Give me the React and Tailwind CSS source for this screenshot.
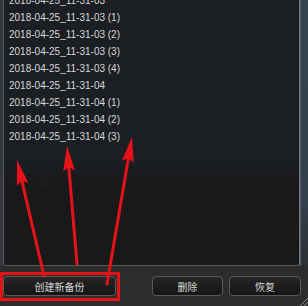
import React from "react";

const rows = [
  "2018-04-25_11-31-03",
  "2018-04-25_11-31-03 (1)",
  "2018-04-25_11-31-03 (2)",
  "2018-04-25_11-31-03 (3)",
  "2018-04-25_11-31-03 (4)",
  "2018-04-25_11-31-04",
  "2018-04-25_11-31-04 (1)",
  "2018-04-25_11-31-04 (2)",
  "2018-04-25_11-31-04 (3)",
];

function Arrow({ tail, tip }) {
  const [x1, y1] = tail;
  const [x2, y2] = tip;
  const dx = x2 - x1;
  const dy = y2 - y1;
  const len = Math.hypot(dx, dy);
  const ux = dx / len;
  const uy = dy / len;
  const px = -uy;
  const py = ux;
  const hl = 25;
  const hw = 6;
  const bx = x2 - ux * hl;
  const by = y2 - uy * hl;
  const nx = x2 - ux * (hl - 4);
  const ny = y2 - uy * (hl - 4);
  const pts = [
    [x2, y2],
    [bx + px * hw, by + py * hw],
    [nx, ny],
    [bx - px * hw, by - py * hw],
  ]
    .map((p) => p.join(","))
    .join(" ");
  return (
    <g>
      <line x1={x1} y1={y1} x2={nx} y2={ny} stroke="#e5121a" strokeWidth="3" strokeLinecap="round" />
      <polygon points={pts} fill="#e5121a" />
    </g>
  );
}

function Btn({ className, children }) {
  return (
    <div
      className={
        "h-[20px] flex items-center justify-center rounded-[4px] border border-[#5a5a5a] bg-[linear-gradient(to_bottom,#262626,#151515)] text-[10px] text-[#d6d6d6] " +
        className
      }
      style={{ fontFamily: '"Noto Sans CJK SC", "Noto Sans", sans-serif' }}
    >
      {children}
    </div>
  );
}

export default function App() {
  return (
    <div className="relative w-[308px] h-[306px] overflow-hidden bg-[#2c2c2c]">
      <div className="flex h-[266px]">
        <div className="w-[3px] bg-[#33373b]" />
        <div className="w-[297px] h-[266px] border-l border-r border-b border-l-[#575b60] border-r-[#6e747b] border-b-[#5a5a5a] rounded-b-[3px] bg-[linear-gradient(to_bottom,#1b1e22_0px,#1b1f23_160px,#19191a_182px,#19191a_266px)] overflow-hidden flex flex-col">
          <div
            className="mt-[-8px] flex flex-col text-[10px] text-[#d8d8d8]"
            style={{ fontFamily: '"Liberation Sans", Arial, sans-serif' }}
          >
            {rows.map((r) => (
              <div key={r} className="h-[17px] flex items-center pl-[5px]">
                {r}
              </div>
            ))}
          </div>
          <div className="mt-[28px] pl-[2px] text-[10px] text-[#1f2022]" style={{ fontFamily: '"Noto Sans CJK SC", sans-serif' }}>
            显示 设置
          </div>
          <div className="mt-[14px] flex gap-[14px] pl-[14px] text-[10px] text-[#1e1e1f]" style={{ fontFamily: '"Noto Sans CJK SC", sans-serif' }}>
            <div className="w-[36px] text-center">打开</div>
            <div className="w-[56px] text-center">分享</div>
            <div className="w-[56px] h-[14px] border border-[#1d1d1e] rounded-[2px] text-center leading-[12px]">分享</div>
            <div className="w-[64px] h-[14px] border border-[#1d1d1e] rounded-[2px] text-center leading-[12px]">退出</div>
          </div>
        </div>
        <div className="w-[8px] border-l border-l-[#59616a] bg-[linear-gradient(to_bottom,#36424d,#33404b_200px,#2d3034)]" />
      </div>
      <div className="flex items-center mt-[10px] pl-[3px]">
        <Btn className="w-[113px]">创建新备份</Btn>
        <Btn className="w-[71px] ml-[36px]">删除</Btn>
        <Btn className="w-[72px] ml-[6px]">恢复</Btn>
      </div>
      <svg className="absolute right-0 bottom-0" width="10" height="10" viewBox="0 0 10 10">
        <line x1="2" y1="10" x2="10" y2="2" stroke="#8a8a8a" strokeWidth="1" />
        <line x1="6" y1="10" x2="10" y2="6" stroke="#8a8a8a" strokeWidth="1" />
      </svg>
      <svg className="absolute left-0 top-0 pointer-events-none" width="308" height="306" viewBox="0 0 308 306">
        <rect x="1.5" y="273.5" width="117" height="26" fill="none" stroke="#e5121a" strokeWidth="3" />
        <Arrow tail={[44, 276]} tip={[17, 160]} />
        <Arrow tail={[77, 264]} tip={[67, 146]} />
        <Arrow tail={[107, 284]} tip={[132, 137]} />
      </svg>
    </div>
  );
}
